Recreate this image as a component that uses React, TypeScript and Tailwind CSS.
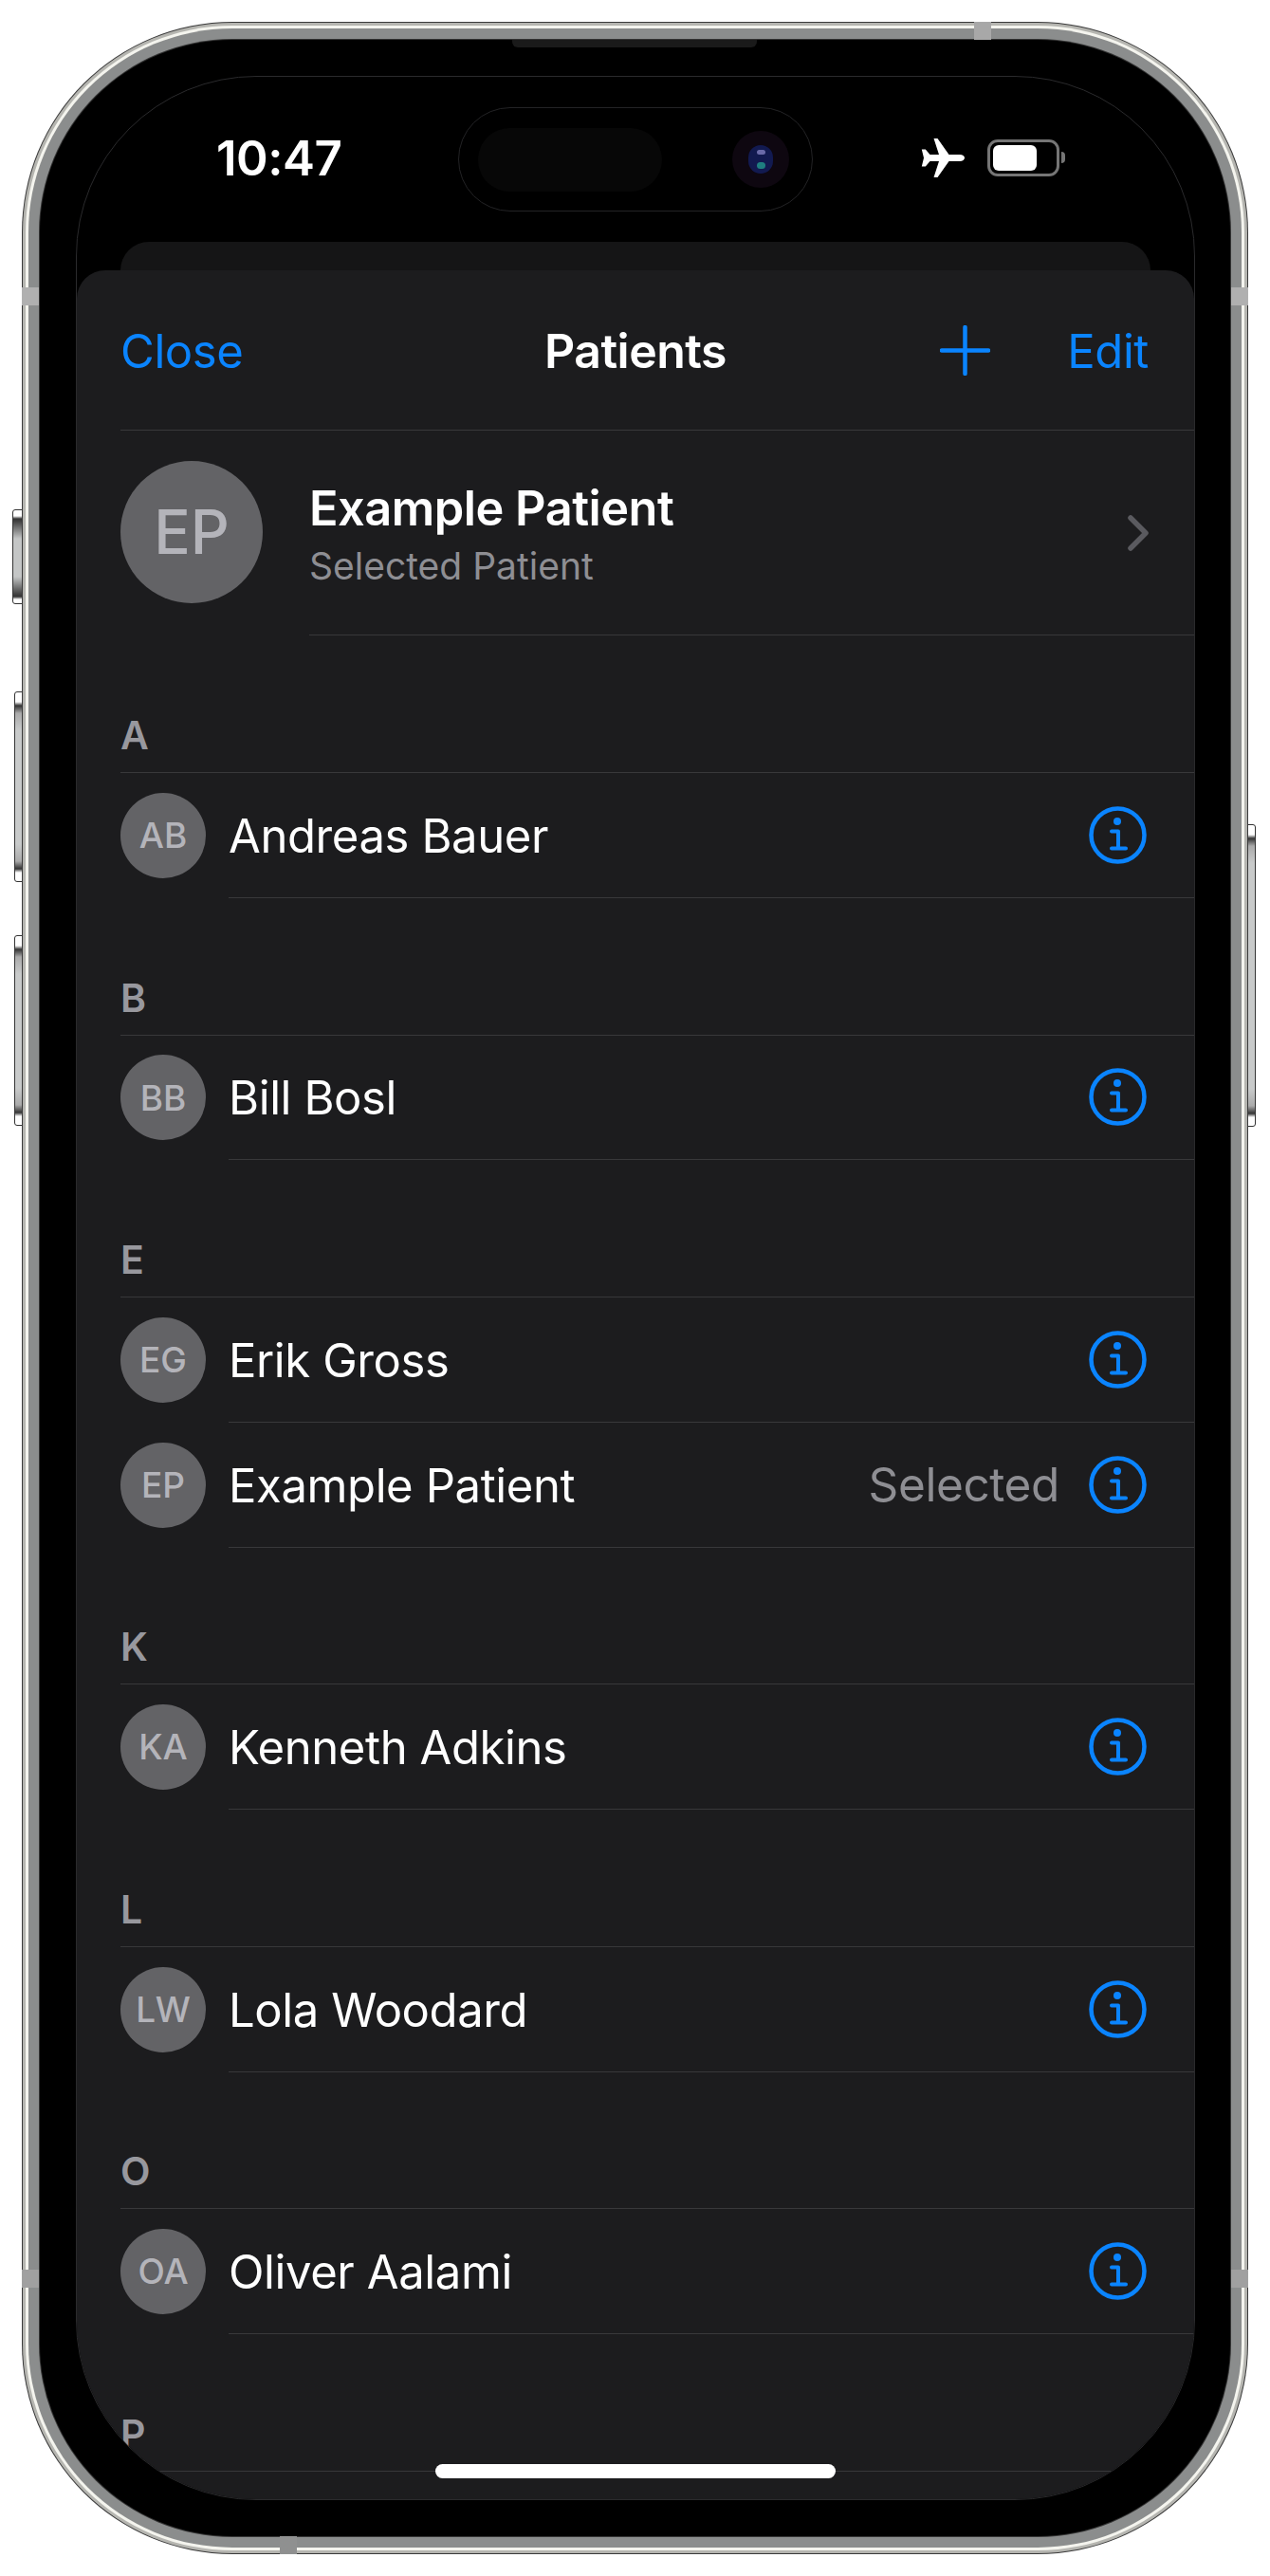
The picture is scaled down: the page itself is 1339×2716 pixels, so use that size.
const sections = [
  { letter: 'A', rows: [{ initials: 'AB', name: 'Andreas Bauer' }] },
  { letter: 'B', rows: [{ initials: 'BB', name: 'Bill Bosl' }] },
  {
    letter: 'E',
    rows: [
      { initials: 'EG', name: 'Erik Gross' },
      { initials: 'EP', name: 'Example Patient', selected: true },
    ],
  },
  { letter: 'K', rows: [{ initials: 'KA', name: 'Kenneth Adkins' }] },
  { letter: 'L', rows: [{ initials: 'LW', name: 'Lola Woodard' }] },
  { letter: 'O', rows: [{ initials: 'OA', name: 'Oliver Aalami' }] },
  { letter: 'P', rows: [] },
];

function InfoIcon() {
  return (
    <svg width="61" height="61" viewBox="0 0 61 61" fill="none" className="shrink-0">
      <circle cx="30.5" cy="30.5" r="28" stroke="#0a84ff" strokeWidth="4.5" />
      <circle cx="30" cy="16" r="4" fill="#0a84ff" />
      <path d="M24 26.500H31V44.500M24 44.500H39" stroke="#0a84ff" strokeWidth="4" strokeLinecap="round" strokeLinejoin="round" />
    </svg>
  );
}

function PlaneIcon() {
  return (
    <svg width="46" height="41" viewBox="0 0 46 41" fill="#fff">
      <path d="M46 20.5c0 2-2.200 3.400-5 3.400H29.500L17.500 41h-4L19 24H9.500L4.800 29.500H.8L3 20.500.8 11.500h4L9.500 17H19L13.500 0h4l12 17H41c2.800 0 5 1.500 5 3.500z" />
    </svg>
  );
}

function Avatar({ initials }: { initials: string }) {
  return (
    <div className="flex h-[90px] w-[90px] shrink-0 items-center justify-center rounded-full bg-[#636366] text-[37px] font-medium text-[#b4b4ba]">
      {initials}
    </div>
  );
}

function PatientRow({ initials, name, selected }: { initials: string; name: string; selected?: boolean }) {
  return (
    <div className="flex h-[131.75px] items-center pl-[46px]">
      <Avatar initials={initials} />
      <div className="ml-[24px] flex h-full flex-1 items-center border-b border-[#38383a] pr-[50px]">
        <span className="flex-1 pt-[2px] text-[49px] leading-none tracking-[-0.4px] text-white">{name}</span>
        {selected && <span className="mr-[31px] pt-[2px] text-[49.5px] leading-none tracking-[-0.4px] text-[#8e8e93]">Selected</span>}
        <InfoIcon />
      </div>
    </div>
  );
}

export default function App() {
  return (
    <div className="relative h-[2716px] w-[1339px] overflow-hidden bg-white font-['Inter',sans-serif]">
      {/* Side buttons */}
      <div className="absolute left-[13px] top-[537px] h-[100px] w-[12px] rounded-l-[3px] border border-[#333] bg-[linear-gradient(to_bottom,#fff_0,#fff_6px,#333_9px,#444_12px,#c4c6c6_30px,#c4c6c6_70px,#444_88px,#333_91px,#fff_94px,#fff_100%)]" />
      <div className="absolute left-[15px] top-[729px] h-[201px] w-[10px] rounded-l-[3px] border border-[#333] bg-[linear-gradient(to_bottom,#fff_0,#fff_10px,#333_14px,#aaa_22px,#c8caca_40px,#c8caca_160px,#aaa_178px,#333_186px,#fff_190px,#fff_100%)]" />
      <div className="absolute left-[15px] top-[986px] h-[201px] w-[10px] rounded-l-[3px] border border-[#333] bg-[linear-gradient(to_bottom,#fff_0,#fff_10px,#333_14px,#aaa_22px,#c8caca_40px,#c8caca_160px,#aaa_178px,#333_186px,#fff_190px,#fff_100%)]" />
      <div className="absolute left-[1314px] top-[869px] h-[319px] w-[10px] rounded-r-[3px] border border-[#333] bg-[linear-gradient(to_bottom,#fff_0,#fff_10px,#333_14px,#aaa_22px,#c8caca_40px,#c8caca_278px,#aaa_296px,#333_304px,#fff_308px,#fff_100%)]" />

      <div className="relative ml-[23px] mt-[23px] h-[2670px] w-[1293px] rounded-[222px] bg-[#3a3a3a] p-px">
        <div className="h-full rounded-[221px] bg-[#b5b5b0] p-[3px]">
          <div className="h-full rounded-[218px] bg-[#f4f4ee] p-[3px]">
            <div className="h-full rounded-[215px] bg-[#8b8d8d] p-[11px]">
              <div className="h-full rounded-[204px] bg-[#333] p-px">
                <div className="h-full rounded-[203px] bg-black pl-[38px] pt-[38px]">
                  {/* Screen */}
                  <div className="relative flex h-[2556px] w-[1180px] flex-col overflow-hidden rounded-[190px] border border-[#2a2a2c] bg-black">
                    {/* Status bar */}
                    <div className="flex h-[174px] shrink-0 items-start pl-[147px] pt-[32px]">
                      <div className="flex h-[110px] w-[255px] items-center pb-[4px] text-[51px] font-semibold leading-none tracking-[-0.5px] text-white">
                        10:47
                      </div>
                      <div className="flex h-[110px] w-[374px] shrink-0 items-center rounded-full border border-[#232325] pl-[20px]">
                        <div className="h-[67px] w-[194px] rounded-full bg-[#070707]" />
                        <div className="ml-[74px] flex h-[60px] w-[60px] items-center justify-center rounded-full bg-[#0e0710]">
                          <div className="flex h-[30px] w-[26px] flex-col items-center justify-between rounded-full bg-[#121a50] py-[5px]">
                            <div className="h-[5px] w-[9px] rounded-full bg-[#6a6aa8]" />
                            <div className="h-[7px] w-[9px] rounded-full bg-[#1f7f80]" />
                          </div>
                        </div>
                      </div>
                      <div className="ml-[114px] flex h-[110px] items-center gap-[24px] pb-[4px]">
                        <PlaneIcon />
                        <div className="flex items-center">
                          <div className="h-[39px] w-[76px] rounded-[11px] border-[3px] border-[#757575] p-[3px]">
                            <div className="h-full w-[46px] rounded-[6px] bg-white" />
                          </div>
                          <div className="ml-[2px] h-[12px] w-[4px] rounded-r-full bg-[#757575]" />
                        </div>
                      </div>
                    </div>

                    <div className="-mb-[10px] mx-[46px] h-[40px] shrink-0 rounded-t-[30px] bg-[#151516]" />

                    {/* Sheet */}
                    <div className="relative flex-1 rounded-t-[30px] bg-[#1c1c1e]">
                      <div className="grid h-[168px] grid-cols-[1fr_auto_1fr] items-center px-[46px]">
                        <span className="pt-[2px] text-[49px] leading-none tracking-[-0.4px] text-[#0a84ff]">Close</span>
                        <span className="pt-[2px] text-[50px] font-semibold leading-none tracking-[-0.5px] text-white">Patients</span>
                        <div className="mr-[2px] flex items-center justify-end gap-[81px]">
                          <svg width="53" height="53" viewBox="0 0 53 53" fill="none">
                            <path d="M26.500 2v49M2 26.500h49" stroke="#0a84ff" strokeWidth="4.500" strokeLinecap="round" />
                          </svg>
                          <span className="pt-[2px] text-[49px] leading-none tracking-[-0.4px] text-[#0a84ff]">Edit</span>
                        </div>
                      </div>

                      <div className="ml-[46px] h-px bg-[#38383a]" />

                      {/* Selected patient */}
                      <div className="flex h-[216.25px] items-start pl-[46px] pt-[32px]">
                        <div className="flex h-[150px] w-[150px] shrink-0 items-center justify-center rounded-full bg-[#636366] text-[64px] font-medium text-[#b4b4ba]">
                          EP
                        </div>
                        <div className="ml-[49px] flex h-[184px] flex-1 items-center justify-between border-b border-[#38383a] pr-[47px]">
                          <div className="flex flex-col gap-[16px] pb-[28px]">
                            <span className="text-[50.500px] font-semibold leading-none tracking-[-0.5px] text-white">Example Patient</span>
                            <span className="text-[39px] leading-none text-[#8e8e93]">Selected Patient</span>
                          </div>
                          <svg width="23" height="38" viewBox="0 0 23 38" fill="none" className="mb-[31px]">
                            <path d="M3 3l16 16L3 35" stroke="#5a5a5f" strokeWidth="5.500" strokeLinecap="round" strokeLinejoin="round" />
                          </svg>
                        </div>
                      </div>

                      {sections.map((section) => (
                        <section key={section.letter}>
                          <div className="flex h-[143.75px] items-end pb-[18px] pl-[46px] text-[41px] font-semibold leading-none text-[#98989e]">
                            {section.letter}
                          </div>
                          <div className="ml-[46px] h-px bg-[#38383a]" />
                          {section.rows.map((row) => (
                            <PatientRow key={row.name} {...row} />
                          ))}
                        </section>
                      ))}
                    </div>

                    {/* Home indicator */}
                    <div className="absolute bottom-[22px] left-[378px] h-[15px] w-[422px] rounded-full bg-white" />
                  </div>
                </div>
              </div>
            </div>
          </div>
        </div>

        {/* Antenna bands and speaker */}
        <div className="absolute left-[1004px] top-0 h-[19px] w-[18px] bg-[#a8a8a8]" />
        <div className="absolute left-[272px] bottom-0 h-[19px] w-[18px] bg-[#8f9090]" />
        <div className="absolute left-0 top-[280px] h-[19px] w-[18px] bg-[#b0b0b0]" />
        <div className="absolute right-0 top-[280px] h-[19px] w-[18px] bg-[#b0b0b0]" />
        <div className="absolute left-0 top-[2370px] h-[19px] w-[18px] bg-[#a0a0a0]" />
        <div className="absolute right-0 top-[2370px] h-[19px] w-[18px] bg-[#a0a0a0]" />
        <div className="absolute left-[517px] top-[19px] h-[8px] w-[258px] rounded-b-[6px] bg-[#1a1a1a]" />
      </div>
    </div>
  );
}
